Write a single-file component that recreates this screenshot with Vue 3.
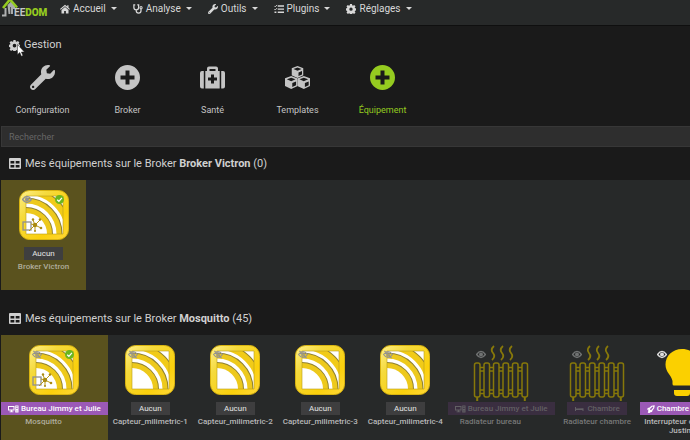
<script setup>
const menus = [
  { label: 'Accueil', icon: 'home' },
  { label: 'Analyse', icon: 'stetho' },
  { label: 'Outils', icon: 'wrench' },
  { label: 'Plugins', icon: 'tasks' },
  { label: 'Réglages', icon: 'cog' },
]

const actions = [
  { label: 'Configuration', icon: 'wrench' },
  { label: 'Broker', icon: 'plus' },
  { label: 'Santé', icon: 'medkit' },
  { label: 'Templates', icon: 'cubes' },
  { label: 'Équipement', icon: 'plus', accent: true },
]

const brokers = [
  {
    name: 'Broker Victron',
    count: 0,
    items: [{ name: 'Broker Victron', art: 'mqtt', eye: 'eye', broker: true }],
  },
  {
    name: 'Mosquitto',
    count: 45,
    items: [
      { name: 'Mosquitto', art: 'mqtt', eye: 'eye-off', broker: true, room: 'Bureau Jimmy et Julie', roomIcon: 'desktop' },
      { name: 'Capteur_milimetric-1', art: 'mqtt', eye: 'eye-off' },
      { name: 'Capteur_milimetric-2', art: 'mqtt', eye: 'eye-off' },
      { name: 'Capteur_milimetric-3', art: 'mqtt', eye: 'eye-off' },
      { name: 'Capteur_milimetric-4', art: 'mqtt', eye: 'eye-off' },
      { name: 'Radiateur bureau', art: 'radiator', eye: 'eye', off: true, room: 'Bureau Jimmy et Julie', roomIcon: 'desktop' },
      { name: 'Radiateur chambre', art: 'radiator', eye: 'eye', off: true, room: 'Chambre', roomIcon: 'bed' },
      { name: 'Interrupteur chambre Justine', art: 'bulb', eye: 'eye', room: 'Chambre Justine', roomIcon: 'rocket' },
    ],
  },
]
</script>

<template>
  <svg class="sprite" aria-hidden="true">
    <defs>
      <linearGradient id="gold" x1="0" y1="0" x2="1" y2="1">
        <stop offset="0" stop-color="#fff08a" />
        <stop offset="0.3" stop-color="#f5da3c" />
        <stop offset="0.7" stop-color="#fbd00c" />
        <stop offset="1" stop-color="#ffd83a" />
      </linearGradient>
      <clipPath id="tile"><rect x="7" y="6" width="37" height="38" /></clipPath>
    </defs>
    <symbol id="home" viewBox="0 0 16 16">
      <path d="M8 1 0 8l1.2 1.3L8 3.4l6.8 5.9L16 8l-2.4-2.1V2h-2v2.1z" />
      <path d="M8 4.7 2.4 9.6V15h4.2v-4h2.8v4h4.2V9.6z" />
    </symbol>
    <symbol id="stetho" viewBox="0 0 16 16">
      <path d="M3.6 1.5H1.4v4.2a3.8 3.8 0 0 0 7.6 0V1.5H6.8M5.2 9.5v1.3a3.7 3.7 0 0 0 7.6 0V8" fill="none" stroke="currentColor" stroke-width="2" />
      <circle cx="12.9" cy="5.8" r="1.7" fill="none" stroke="currentColor" stroke-width="1.7" />
    </symbol>
    <symbol id="wrench" viewBox="0 0 512 512">
      <path fill-rule="evenodd" d="M507.7 109.1c-2.2-9-13.5-12.1-20.1-5.5l-74.4 74.4-67.9-11.300L334 98.900l74.400-74.400c6.600-6.600 3.400-17.900-5.700-20.200-47.400-11.700-99.600.9-136.600 37.900-39.600 39.600-50.500 97.100-34.100 147.200L18.700 402.800c-25 25-25 65.500 0 90.500s65.500 25 90.500 0l213.200-213.200c50.100 16.700 107.500 5.700 147.400-34.200 37.100-37.100 49.700-89.300 37.900-136.800zM64 472c-13.200 0-24-10.800-24-24s10.700-24 24-24 24 10.700 24 24-10.700 24-24 24z" />
    </symbol>
    <symbol id="tasks" viewBox="0 0 16 16">
      <path d="M6 2h10v2.200H6zM6 7h10v2.200H6zM6 12h10v2.200H6zM.8 12h3v2.200h-3z" />
      <path d="m.5 3 1.500 1.500L4.800 1.500M.5 8 2 9.500l2.800-3" fill="none" stroke="currentColor" stroke-width="1.400" />
    </symbol>
    <symbol id="cog" viewBox="0 0 24 24">
      <path fill-rule="evenodd" d="M9.700 0h4.600l.6 3.200 1.900.8 2.700-1.900 3.300 3.300-1.900 2.700.8 1.900 3.200.6v4.700l-3.200.6-.8 1.900 1.900 2.700-3.300 3.300-2.700-1.900-1.900.8-.6 3.300H9.700l-.6-3.300-1.900-.8-2.700 1.900-3.300-3.300 1.900-2.700-.8-1.900L-.9 15.300v-4.700l3.200-.6.8-1.900-1.900-2.700 3.300-3.300L7.200 4l1.900-.8zM12 8.300a4 4 0 1 0 0 8 4 4 0 0 0 0-8z" />
    </symbol>
    <symbol id="plus" viewBox="0 0 25 25">
      <path fill-rule="evenodd" d="M12.500 0a12.500 12.500 0 1 0 0 25 12.500 12.500 0 0 0 0-25zM10.500 5.500h4v5h5v4h-5v5h-4v-5h-5v-4h5z" />
    </symbol>
    <symbol id="medkit" viewBox="0 0 25 25">
      <path fill-rule="evenodd" d="M5.300 6H7V3.500Q7 1.500 9 1.500h7q2 0 2 2V6h1.700v17.500H5.300zM9.500 4v2h6V4zM11 9.500v3H8v3h3v3h3v-3h3v-3h-3v-3z" />
      <path d="M3.800 6H2Q0 6 0 8v13.500q0 2 2 2h1.800zM21.200 6H23q2 0 2 2v13.500q0 2-2 2h-1.800z" />
    </symbol>
    <symbol id="cube" viewBox="0 0 12 12">
      <path fill-rule="evenodd" d="M6 0 12 2.200v7L6 12 0 9.200v-7zM6 1.600 2 3.100 6 4.800l4-1.700zM7 6.500v3.600l3.500-1.600V5z" />
    </symbol>
    <symbol id="cubes" viewBox="0 0 25 25">
      <use href="#cube" x="6.500" y="1" width="12" height="12" />
      <use href="#cube" x="-0.300" y="11" width="13" height="13" />
      <use href="#cube" x="12.300" y="11" width="13" height="13" />
    </symbol>
    <symbol id="table" viewBox="0 0 12 11">
      <path fill-rule="evenodd" d="M1 0h10q1 0 1 1v9q0 1-1 1H1q-1 0-1-1V1q0-1 1-1zM1.500 3v2.500h3.800V3zM6.700 3v2.500h3.800V3zM1.500 7v2.500h3.800V7zM6.700 7v2.500h3.800V7z" />
    </symbol>
    <symbol id="eye" viewBox="0 0 18 14">
      <path d="M1 7q8-11 16 0-8 11-16 0z" fill="none" stroke="currentColor" stroke-width="2.400" />
      <circle cx="9" cy="7" r="3.600" />
    </symbol>
    <symbol id="eye-off" viewBox="0 0 18 14">
      <path d="M1 7q8-11 16 0-8 11-16 0zM2.500.5l13 13" fill="none" stroke="currentColor" stroke-width="2" />
      <circle cx="9" cy="7" r="3" fill="none" stroke="currentColor" stroke-width="1.700" />
    </symbol>
    <symbol id="desktop" viewBox="0 0 22 16">
      <path fill-rule="evenodd" d="M0 2h13v9H8.500v2H11v1.500H3V13h2.500v-2H0zM2 4v5h9V4z" />
      <path fill-rule="evenodd" d="M14.500 1H21v14h-6.500zM16 3v1.500h3.500V3zM16 6v1.500h3.500V6zM17 11v2h1.800v-2z" />
    </symbol>
    <symbol id="bed" viewBox="0 0 22 16"><path d="M2 4h2v3l15-.5V12h-2v-2H4v2H2z" /></symbol>
    <symbol id="rocket" viewBox="0 0 16 16">
      <path fill-rule="evenodd" d="M15.500.5Q8 .5 5 5L1.500 6 0 9.500l3-.5L2 13l1 1-2 2h4l2-1.500L10 14l1-3q4.500-3 4.500-10.500zM11 3.200q1.700 0 1.700 1.800L8 10.500 5.500 8.500z" />
    </symbol>
    <symbol id="mqtt" viewBox="0 0 50 50">
      <rect x="0.500" y="0.500" width="49" height="49" rx="10" fill="url(#gold)" stroke="#d9b410" />
      <rect x="7" y="6" width="37" height="38" fill="#fff" />
      <g clip-path="url(#tile)" fill="none">
        <circle cx="7" cy="44" r="24.500" stroke="#8f8130" stroke-width="5" />
        <circle cx="7" cy="44" r="34" stroke="#8f8130" stroke-width="5" />
        <circle cx="7" cy="44" r="43.500" stroke="#8f8130" stroke-width="6" />
        <circle cx="7" cy="44" r="23.500" stroke="#edc91c" stroke-width="5" />
        <circle cx="7" cy="44" r="33" stroke="#edc91c" stroke-width="5" />
        <circle cx="7" cy="44" r="42.500" stroke="#f1cb18" stroke-width="6" />
      </g>
      <path d="M7 44V6h37v38z" fill="none" stroke="#b99c1d" stroke-opacity="0.600" />
    </symbol>
    <symbol id="hub" viewBox="0 0 26 18">
      <rect x="1" y="6" width="8" height="8" fill="none" stroke="#909090" stroke-width="1.300" />
      <path d="M13 9 7 15M13 9l5-5M13 9l6 3M13 9l-2-5M13 9 9 8M13 9v6" fill="none" stroke="#b99a16" />
      <g fill="#a98a12"><circle cx="13" cy="9" r="2.200" /><circle cx="18" cy="3.500" r="1.300" /><circle cx="19" cy="12" r="1.300" /><circle cx="11" cy="3.500" r="1.200" /><circle cx="13" cy="15" r="1" /></g>
    </symbol>
    <symbol id="check" viewBox="0 0 9 9">
      <circle cx="4.500" cy="4.500" r="4.500" fill="#6bb61e" />
      <path d="m2.200 4.700 1.700 1.600 3-3.500" fill="none" stroke="#fff" stroke-width="1.300" />
    </symbol>
    <symbol id="radiator" viewBox="0 0 56 56">
      <g fill="none" stroke="currentColor" stroke-width="1.500">
        <path d="M21 1q-4 3.500-1 7t-1 7M30 1q-4 3.500-1 7t-1 7M39 1q-4 3.500-1 7t-1 7" stroke-width="1.800" />
        <rect x="1.500" y="18" width="5.500" height="34" rx="2" />
        <rect x="11" y="18" width="5.500" height="34" rx="2" />
        <rect x="20.500" y="18" width="5.500" height="34" rx="2" />
        <rect x="30" y="18" width="5.500" height="34" rx="2" />
        <rect x="39.500" y="18" width="5.500" height="34" rx="2" />
        <rect x="49" y="18" width="5.500" height="34" rx="2" />
        <path d="M7 22.500h4M7 26h4M16.500 22.500h4M16.500 26h4M26 22.500h4M26 26h4M35.500 22.500h4M35.500 26h4M45 22.500h4M45 26h4M7 45h4M7 48.500h4M16.500 45h4M16.500 48.500h4M26 45h4M26 48.500h4M35.500 45h4M35.500 48.500h4M45 45h4M45 48.500h4" />
        <path d="M4.200 52v4M51.800 52v4" stroke-width="2" />
      </g>
    </symbol>
    <symbol id="bulb" viewBox="0 0 50 52">
      <path d="M25 4c-9.500 0-16.500 7-16.500 15.500 0 8 6 10.500 7 16.500v3q0 1.500 1.500 1.500h16q1.500 0 1.500-1.500v-3c1-6 7-8.500 7-16.500C41.500 11 34.500 4 25 4zM17 45h16v3q0 3-3 3H20q-3 0-3-3z" />
    </symbol>
  </svg>

  <header class="topbar">
    <a class="logo" href="#" aria-label="Jeedom">
      <svg class="logo-house" viewBox="0 0 18 18">
        <path d="M3.500 8v7.500H0" fill="none" stroke="#aeb0b0" stroke-width="2" />
        <path d="M5.500 5 9.500 1 13 5v4h-2v5H6.500z" fill="#a9abab" />
        <path d="M1 8 8-.5l7 8" fill="none" stroke="#95cb20" stroke-width="2.600" />
        <path d="M8.500 7v7" stroke="#555" />
      </svg>
      <span class="logo-text">EE<b>DOM</b></span>
    </a>
    <nav class="menu">
      <a v-for="m in menus" :key="m.label" href="#" class="menu-item">
        <svg class="menu-icon"><use :href="'#' + m.icon" /></svg>{{ m.label }}<i class="caret"></i>
      </a>
    </nav>
  </header>

  <main>
    <h2 class="legend main-title">
      <span class="gear">
        <svg class="legend-icon"><use href="#cog" /></svg>
        <svg class="pointer" viewBox="0 0 8 13"><path d="M.5.500v10l2.300-2 1.600 3.800 1.500-.7-1.500-3.600h3z" fill="#fff" stroke="#222" stroke-width="0.500" /></svg>
      </span>
      Gestion
    </h2>

    <div class="actions">
      <button v-for="a in actions" :key="a.label" type="button" class="action" :class="{ accent: a.accent }">
        <svg class="action-icon"><use :href="'#' + a.icon" /></svg>
        <span>{{ a.label }}</span>
      </button>
    </div>

    <input class="search" type="search" placeholder="Rechercher" aria-label="Rechercher" />

    <section v-for="b in brokers" :key="b.name">
      <h2 class="legend broker-title">
        <svg class="table-icon"><use href="#table" /></svg>
        <span>Mes équipements sur le Broker <b>{{ b.name }}</b> ({{ b.count }})</span>
      </h2>
      <div class="panel">
        <article v-for="e in b.items" :key="e.name" class="card" :class="{ broker: e.broker, off: e.off }">
          <div class="art" :class="e.art">
            <svg class="picture"><use :href="'#' + e.art" /></svg>
            <svg class="visibility"><use :href="'#' + e.eye" /></svg>
            <template v-if="e.broker">
              <svg class="state"><use href="#check" /></svg>
              <svg class="hub"><use href="#hub" /></svg>
            </template>
          </div>
          <span class="room" :class="{ named: e.room }">
            <svg v-if="e.room" class="room-icon" :class="e.roomIcon"><use :href="'#' + e.roomIcon" /></svg>{{ e.room || 'Aucun' }}
          </span>
          <span class="name">{{ e.name }}</span>
        </article>
      </div>
    </section>
  </main>
</template>

<style>
body {
  background: #1a1a1a;
  overflow: hidden;
}
</style>

<style scoped>
* {
  box-sizing: border-box;
}
.sprite {
  position: absolute;
  width: 0;
  height: 0;
}
svg {
  fill: currentColor;
  flex: none;
}
.topbar,
main,
.action,
.search {
  font-family: Roboto, 'Liberation Sans', sans-serif;
}
.topbar {
  display: flex;
  height: 26px;
  background: #272929;
  border-bottom: 1px solid #0f0f0f;
}
.logo {
  display: flex;
  width: 60px;
  padding-left: 2px;
  text-decoration: none;
}
.logo-house {
  width: 18px;
  height: 18px;
  margin-right: -6px;
}
.logo-text {
  color: #c4c6c6;
  font-size: 10px;
  font-weight: 700;
  line-height: 26px;
}
.logo-text b {
  color: #95cb20;
}
.menu {
  display: flex;
  gap: 16px;
}
.menu-item {
  display: flex;
  align-items: center;
  height: 17px;
  gap: 3px;
  color: #d8d8d8;
  font-size: 10px;
  text-decoration: none;
}
.menu-icon {
  width: 10px;
  height: 10px;
}
.caret {
  margin-left: 2px;
  border: 3px solid transparent;
  border-top-color: currentColor;
  border-bottom: 0;
}
.legend {
  display: flex;
  align-items: center;
  gap: 4px;
  margin: 0;
  color: #d0d0d0;
  font-size: 11px;
  font-weight: 400;
  line-height: 18px;
}
.main-title {
  padding: 10px 9px 0;
}
.gear {
  position: relative;
  display: flex;
}
.legend-icon {
  width: 11px;
  height: 11px;
}
.pointer {
  position: absolute;
  left: 8px;
  top: 4px;
  width: 8px;
  height: 13px;
}
.actions {
  display: flex;
  padding-top: 11px;
}
.action {
  display: flex;
  flex-direction: column;
  align-items: center;
  gap: 13px;
  width: 85px;
  height: 60px;
  padding: 0;
  border: 0;
  background: none;
  color: #c4c4c4;
  font-size: 9px;
  line-height: 14px;
}
.action.accent {
  color: #95cb20;
}
.action-icon {
  width: 25px;
  height: 25px;
}
.search {
  display: block;
  width: calc(100% - 1px);
  height: 21px;
  margin: 1px 0 0 1px;
  padding: 0 7px;
  border: 1px solid #373737;
  border-right: 0;
  border-radius: 0;
  background: #2e2e2e;
  color: #ccc;
  font-size: 9px;
  outline: 0;
  appearance: none;
}
.search::placeholder {
  color: #666;
}
.broker-title {
  height: 33px;
  padding: 0 9px;
}
.table-icon {
  width: 12px;
  height: 11px;
}
.panel {
  display: flex;
  height: 110px;
  margin-left: 1px;
  margin-bottom: 12px;
  background: #272929;
  overflow: hidden;
}
.card {
  display: flex;
  flex: none;
  flex-direction: column;
  align-items: center;
  min-width: 85px;
  padding-top: 10px;
  color: #b8b8b8;
}
.card.broker {
  background: #5a521e;
}
.art {
  position: relative;
  width: 50px;
  height: 50px;
  margin-bottom: 7px;
}
.picture {
  display: block;
  width: 100%;
  height: 100%;
}
.art.radiator {
  width: 56px;
  color: #87780a;
}
.radiator .picture {
  height: 56px;
}
.bulb .picture {
  height: 52px;
  color: #fbd000;
}
.visibility {
  position: absolute;
  left: 3px;
  top: 5px;
  width: 10px;
  height: 9px;
  color: #929292;
}
.bulb .visibility {
  left: 0;
  color: #ddd;
}
.state {
  position: absolute;
  right: 5px;
  top: 5px;
  width: 9px;
  height: 9px;
}
.hub {
  position: absolute;
  left: 3px;
  bottom: 6px;
  width: 26px;
  height: 18px;
}
.room {
  display: flex;
  align-items: center;
  gap: 2px;
  height: 13px;
  padding: 0 8px;
  background: #3e3e3f;
  color: #e4e4e4;
  font-size: 8px;
  white-space: nowrap;
}
.room.named {
  padding: 0 7px;
  background: #9b59b6;
  color: #fff;
  font-weight: 500;
}
.room-icon {
  width: 11px;
  height: 8px;
}
.room-icon.rocket {
  width: 8px;
}
.name {
  align-self: flex-start;
  width: 85px;
  padding: 2px 2px 0;
  font-size: 8px;
  font-weight: 500;
  line-height: 9px;
  text-align: center;
}
.broker .name {
  color: #b0ad9c;
}
.off .visibility {
  color: #707272;
}
.off .room {
  background: #3a2e40;
  color: #626064;
}
.off .name {
  color: #777878;
}
</style>
